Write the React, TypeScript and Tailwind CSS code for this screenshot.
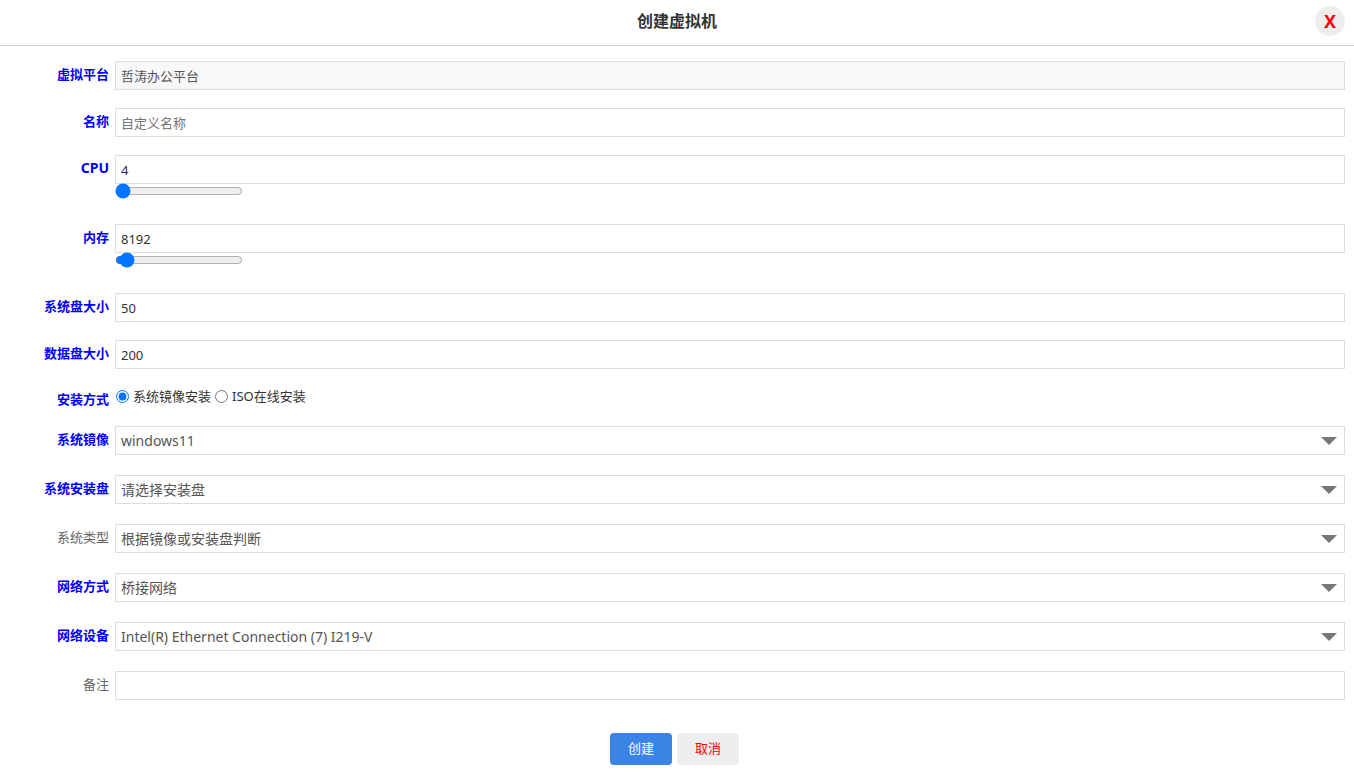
import { useState } from "react";

const FONT = { fontFamily: '"Noto Sans", "Noto Sans CJK SC", sans-serif' };

function Label({ text, required = true }: { text: string; required?: boolean }) {
  return (
    <div
      className={`w-[110px] shrink-0 pr-[1px] text-right text-[13px] leading-[27px] ${
        required ? "font-bold text-[#0000ff]" : "text-[#666]"
      }`}
    >
      {text}
    </div>
  );
}

function Arrow() {
  return (
    <svg className="absolute right-[7px] top-[10px]" width="16" height="8" viewBox="0 0 16 8">
      <path d="M0 0 L16 0 L8 8 Z" fill="#777" />
    </svg>
  );
}

export default function App() {
  const [cpu, setCpu] = useState(4);
  const [mem, setMem] = useState(8192);
  const [mode, setMode] = useState("image");

  const fieldCls =
    "h-[29px] border border-[#ddd] px-[5px] text-[13px] text-[#333] outline-none placeholder:text-[#757575]";
  const inputCls = `${fieldCls} flex-1`;

  const selects = [
    { label: "系统镜像", value: "windows11", required: true },
    { label: "系统安装盘", value: "请选择安装盘", required: true },
    { label: "系统类型", value: "根据镜像或安装盘判断", required: false },
    { label: "网络方式", value: "桥接网络", required: true },
    { label: "网络设备", value: "Intel(R) Ethernet Connection (7) I219-V", required: true },
  ];

  return (
    <div className="min-h-screen bg-white" style={FONT}>
      {/* Header */}
      <div className="relative flex h-[46px] items-center justify-center border-b border-[#ccc]">
        <div className="-mt-[3px] text-[16px] font-bold text-[#333]">创建虚拟机</div>
        <button className="absolute right-[9px] top-[6px] flex h-[30px] w-[30px] items-center justify-center rounded-full bg-[#eee] text-[18px] font-bold text-[#ff0000]">
          X
        </button>
      </div>

      <div className="pr-[9px] pt-[15px]">
        {/* 虚拟平台 */}
        <div className="mb-[18px] flex gap-[5px]">
          <Label text="虚拟平台" />
          <input className={`${inputCls} bg-[#f8f8f8] text-[#555]`} value="哲涛办公平台" readOnly />
        </div>

        {/* 名称 */}
        <div className="mb-[18px] flex gap-[5px]">
          <Label text="名称" />
          <input className={inputCls} placeholder="自定义名称" />
        </div>

        {/* CPU */}
        <div className="mb-[18px] flex gap-[5px]">
          <div className="w-[110px] shrink-0 pr-[1px] text-right text-[14px] font-bold leading-[25px] text-[#0000ff]">
            CPU
          </div>
          <div className="flex flex-1 flex-col">
            <input className={`${fieldCls} w-full`} value={cpu} onChange={(e) => setCpu(Number(e.target.value))} />
            <div className="flex h-[22px] items-start">
              <input
                type="range"
                min={4}
                max={128}
                value={cpu}
                onChange={(e) => setCpu(Number(e.target.value))}
                className="m-0 block h-[14px] w-[128px]"
              />
            </div>
          </div>
        </div>

        {/* 内存 */}
        <div className="mb-[18px] flex gap-[5px]">
          <Label text="内存" />
          <div className="flex flex-1 flex-col">
            <input className={`${fieldCls} w-full`} value={mem} onChange={(e) => setMem(Number(e.target.value))} />
            <div className="flex h-[22px] items-start">
              <input
                type="range"
                min={4096}
                max={131072}
                value={mem}
                onChange={(e) => setMem(Number(e.target.value))}
                className="m-0 block h-[14px] w-[128px]"
              />
            </div>
          </div>
        </div>

        {/* 系统盘大小 */}
        <div className="mb-[18px] flex gap-[5px]">
          <Label text="系统盘大小" />
          <input className={inputCls} defaultValue="50" />
        </div>

        {/* 数据盘大小 */}
        <div className="mb-[18px] flex gap-[5px]">
          <Label text="数据盘大小" />
          <input className={inputCls} defaultValue="200" />
        </div>

        {/* 安装方式 */}
        <div className="mb-[18px] flex h-[21px] items-start gap-[5px]">
          <div className="w-[110px] shrink-0 pr-[1px] pt-[2px] text-right text-[13px] font-bold leading-[21px] text-[#0000ff]">
            安装方式
          </div>
          <div className="flex items-center text-[13px] text-[#333]">
            <label className="flex items-center">
              <input
                type="radio"
                name="mode"
                checked={mode === "image"}
                onChange={() => setMode("image")}
                className="m-0 ml-[1px] mr-[4px] h-[13px] w-[13px]"
              />
              系统镜像安装
            </label>
            <label className="ml-[4px] flex items-center">
              <input
                type="radio"
                name="mode"
                checked={mode === "iso"}
                onChange={() => setMode("iso")}
                className="m-0 mr-[4px] h-[13px] w-[13px]"
              />
              ISO在线安装
            </label>
          </div>
        </div>

        {/* Selects */}
        {selects.map((s) => (
          <div key={s.label} className="mb-[20px] flex gap-[5px]">
            <Label text={s.label} required={s.required} />
            <div className="relative flex h-[29px] flex-1 items-center border border-[#ddd] px-[5px] text-[14px] text-[#555]">
              {s.value}
              <Arrow />
            </div>
          </div>
        ))}

        {/* 备注 */}
        <div className="mb-[33px] flex gap-[5px]">
          <Label text="备注" required={false} />
          <input className={inputCls} />
        </div>

        {/* Buttons */}
        <div className="flex justify-center gap-[5px] pl-[4px]">
          <button className="h-[32px] w-[62px] rounded-[4px] bg-[#3b84e6] text-[13px] text-white">创建</button>
          <button className="h-[32px] w-[62px] rounded-[4px] bg-[#eee] text-[13px] text-[#ff0000]">取消</button>
        </div>
      </div>
    </div>
  );
}
